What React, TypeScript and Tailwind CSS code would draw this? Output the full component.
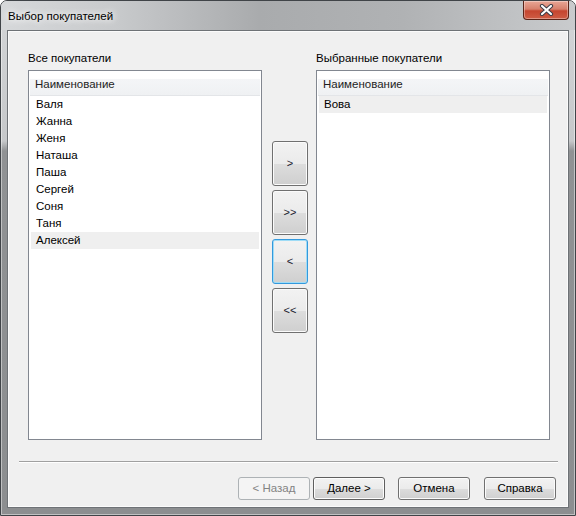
import type { ReactNode } from 'react';

// ---------------------------------------------------------------------------
// Daten
// ---------------------------------------------------------------------------

const allBuyers = ['Валя', 'Жанна', 'Женя', 'Наташа', 'Паша', 'Сергей', 'Соня', 'Таня', 'Алексей'];
const chosenBuyers = ['Вова'];

const font = "font-['Segoe_UI','Liberation_Sans',sans-serif]";

// ---------------------------------------------------------------------------
// Bausteine
// ---------------------------------------------------------------------------

function ListBox({ items, selected }: { items: string[]; selected: string }) {
  return (
    <div className="h-[370px] w-[234px] border border-[#828790] bg-white p-[1px]">
      <div className="flex h-[24px] items-center border-b border-[#e3e5e8] bg-[linear-gradient(180deg,#ffffff_0%,#ffffff_28%,#f4f5f7_32%,#eff1f3_100%)] pl-[5px] pt-[3px] text-[11.5px] text-[#1e1e1e]">
        Наименование
      </div>
      <div className="px-[1px]">
        {items.map((name) => (
          <div
            key={name}
            className={`flex h-[17px] items-center pl-[5px] text-[11.5px] text-black ${
              name === selected ? 'bg-[#efefef]' : ''
            }`}
          >
            {name}
          </div>
        ))}
      </div>
    </div>
  );
}

function MoveButton({ children, focused }: { children: ReactNode; focused?: boolean }) {
  return (
    <div
      className={`flex h-[45px] w-[36px] items-center justify-center rounded-[3px] border bg-[linear-gradient(180deg,#f2f2f2_0%,#ebebeb_50%,#dddddd_51%,#cfcfcf_100%)] text-[11px] text-[#1a1a2e] ${
        focused
          ? 'border-[#3399dd] shadow-[inset_0_0_0_1px_#9fdcf6]'
          : 'border-[#707070] shadow-[inset_0_0_0_1px_#fbfbfb]'
      }`}
    >
      {children}
    </div>
  );
}

function DialogButton({ children, disabled, isDefault }: { children: ReactNode; disabled?: boolean; isDefault?: boolean }) {
  if (disabled) {
    return (
      <div className="flex h-[23px] w-[72px] items-center justify-center rounded-[3px] border border-[#adb2b5] bg-[#f4f4f4] text-[11.5px] text-[#838383]">
        {children}
      </div>
    );
  }
  return (
    <div
      className={`flex h-[23px] w-[72px] items-center justify-center rounded-[3px] border text-[11.5px] text-black bg-[linear-gradient(180deg,#f2f2f2_0%,#ebebeb_50%,#dddddd_51%,#cfcfcf_100%)] ${
        isDefault ? 'border-[#5f5f5f] shadow-[inset_0_0_0_1px_#fdfdfd]' : 'border-[#707070] shadow-[inset_0_0_0_1px_#fbfbfb]'
      }`}
    >
      {children}
    </div>
  );
}

function CloseButton() {
  return (
    <div className="flex h-[19px] w-[46px] items-center justify-center rounded-b-[4px] border border-t-0 border-[#5b2418] bg-[linear-gradient(180deg,#e9a796_0%,#d7806c_45%,#c5452f_55%,#cf5d45_100%)] shadow-[inset_0_0_0_1px_rgba(255,255,255,0.35)]">
      <svg width="15" height="12" viewBox="0 0 15 12">
        <path d="M3 2 L12 10 M12 2 L3 10" stroke="#3c3c46" strokeWidth="4.2" strokeLinecap="round" />
        <path d="M3 2 L12 10 M12 2 L3 10" stroke="#ffffff" strokeWidth="2.2" strokeLinecap="round" />
      </svg>
    </div>
  );
}

// ---------------------------------------------------------------------------
// Haupt-Komponente
// ---------------------------------------------------------------------------

export default function App() {
  return (
    <div
      className={`${font} flex h-[516px] w-[576px] flex-col rounded-t-[7px] border border-[#404448] bg-[linear-gradient(180deg,#d4d6d8_0px,#c6c8ca_140px,#909294_150px,#8c8e90_100%)] shadow-[inset_0_0_0_1px_rgba(255,255,255,0.45)]`}
    >
      {/* Titelleiste */}
      <div className="flex h-[29px] shrink-0 items-start justify-between rounded-t-[6px] bg-[linear-gradient(90deg,#d6d8da_0%,#c8cacc_20%,#a9abad_45%,#b0b2b4_70%,#c9cbcd_100%)]">
        <div className="pl-[7px] pt-[7px] text-[11.5px] text-black [text-shadow:0_0_6px_#ffffff,0_0_10px_#ffffff]">
          Выбор покупателей
        </div>
        <div className="mr-[6px]">
          <CloseButton />
        </div>
      </div>

      {/* Client-Bereich */}
      <div className="mx-[6px] mb-[7px] flex-1 border border-[#6e7276] bg-[#f0f0f0] shadow-[inset_0_0_0_1px_#fbfbfb]">
        <div className="flex pl-[20px] pt-[19px]">
          <div className="flex flex-col">
            <div className="h-[16px] text-[11.5px] leading-[16px] text-black">Все покупатели</div>
            <div className="mt-[4px]">
              <ListBox items={allBuyers} selected="Алексей" />
            </div>
          </div>

          <div className="ml-[10px] mt-[91px] flex flex-col gap-[4px]">
            <MoveButton>&gt;</MoveButton>
            <MoveButton>&gt;&gt;</MoveButton>
            <MoveButton focused>&lt;</MoveButton>
            <MoveButton>&lt;&lt;</MoveButton>
          </div>

          <div className="ml-[8px] flex flex-col">
            <div className="h-[16px] text-[11.5px] leading-[16px] text-black">Выбранные покупатели</div>
            <div className="mt-[4px]">
              <ListBox items={chosenBuyers} selected="Вова" />
            </div>
          </div>
        </div>

        {/* Trennlinie */}
        <div className="ml-[11px] mr-[10px] mt-[21px] h-[2px] border-t border-b border-t-[#a0a0a0] border-b-[#ffffff]" />

        {/* Buttons */}
        <div className="mt-[14px] flex justify-end pr-[12px]">
          <DialogButton disabled>&lt; Назад</DialogButton>
          <div className="ml-[3px]">
            <DialogButton isDefault>Далее &gt;</DialogButton>
          </div>
          <div className="ml-[13px]">
            <DialogButton>Отмена</DialogButton>
          </div>
          <div className="ml-[14px]">
            <DialogButton>Справка</DialogButton>
          </div>
        </div>
      </div>
    </div>
  );
}
